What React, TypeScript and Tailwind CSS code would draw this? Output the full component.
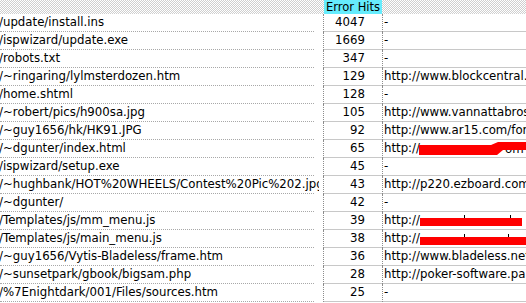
import React from "react";

type Row = { path: string; hits: string; ref: string; red?: "a" | "b" | "c" };

const rows: Row[] = [
  { path: "/update/install.ins", hits: "4047", ref: "-" },
  { path: "/ispwizard/update.exe", hits: "1669", ref: "-" },
  { path: "/robots.txt", hits: "347", ref: "-" },
  { path: "/~ringaring/lylmsterdozen.htm", hits: "129", ref: "http://www.blockcentral.com/" },
  { path: "/home.shtml", hits: "128", ref: "-" },
  { path: "/~robert/pics/h900sa.jpg", hits: "105", ref: "http://www.vannattabros.com/" },
  { path: "/~guy1656/hk/HK91.JPG", hits: "92", ref: "http://www.ar15.com/forums/" },
  { path: "/~dgunter/index.html", hits: "65", ref: "http://", red: "a" },
  { path: "/ispwizard/setup.exe", hits: "45", ref: "-" },
  { path: "/~hughbank/HOT%20WHEELS/Contest%20Pic%202.jpg", hits: "43", ref: "http://p220.ezboard.com/" },
  { path: "/~dgunter/", hits: "42", ref: "-" },
  { path: "/Templates/js/mm_menu.js", hits: "39", ref: "http://", red: "b" },
  { path: "/Templates/js/main_menu.js", hits: "38", ref: "http://", red: "c" },
  { path: "/~guy1656/Vytis-Bladeless/frame.htm", hits: "36", ref: "http://www.bladeless.net/" },
  { path: "/~sunsetpark/gbook/bigsam.php", hits: "28", ref: "http://poker-software.pa" },
  { path: "/%7Enightdark/001/Files/sources.htm", hits: "25", ref: "-" },
];

function Redact({ kind }: { kind: "a" | "b" | "c" }) {
  return (
    <svg className="absolute left-0 top-0" width="144" height="18" viewBox="0 0 144 18">
      {kind === "a" && (
        <>
          <text x="122" y="13" fontSize="11.75" fontFamily="DejaVu Sans" fill="#000">om</text>
          <polygon points="36,5 108,5 115,2 144,2 144,10 120,10 114,15 36,15" fill="#ff0000" />
        </>
      )}
      {kind === "b" && (
        <>
          <rect x="81" y="3" width="1" height="3" fill="#000" />
          <rect x="127" y="3" width="1" height="3" fill="#000" />
          <rect x="37" y="6" width="102" height="8" fill="#ff0000" />
        </>
      )}
      {kind === "c" && (
        <>
          <rect x="81" y="4" width="1" height="3" fill="#000" />
          <rect x="125" y="4" width="1" height="3" fill="#000" />
          <rect x="37" y="7" width="107" height="8" fill="#ff0000" />
        </>
      )}
    </svg>
  );
}

const checker =
  "bg-[repeating-conic-gradient(#cfcfcf_0_25%,#ffffff_0_50%)] bg-[length:2px_2px]";

export default function App() {
  return (
    <div className="w-[526px] h-[303px] overflow-hidden bg-white text-black font-['DejaVu_Sans',sans-serif] text-[11.75px] leading-none">
      <div className="flex h-[14px]">
        <div className={`w-[324px] ${checker}`} />
        <div className="w-[58px] bg-[#66ecfd] flex items-center justify-center text-[11.5px] pt-[1px] whitespace-nowrap">
          Error Hits
        </div>
        <div className={`flex-1 ${checker}`} />
      </div>
      {rows.map((r, i) => (
        <div key={i} className="flex h-[18px]">
          <div className="w-[323px] h-full overflow-hidden">
            <div className="w-[314px] h-full border-b border-dotted border-[#a8a8a8]">
              <div className="w-[320px] h-full flex items-center whitespace-nowrap -ml-[1px] overflow-hidden">
                {r.path}
              </div>
            </div>
          </div>
          <div className="w-[59px] h-full border-l border-dotted border-[#8c8c8c]">
            <div className="h-full border-b border-solid border-[#c8c8c8] flex items-center justify-end pr-[17px]">
              {r.hits}
            </div>
          </div>
          <div className="flex-1 h-full border-l border-dotted border-[#8c8c8c] overflow-hidden">
            <div className="relative h-full border-b border-solid border-[#c8c8c8] flex items-center pl-[1px] whitespace-nowrap">
              {r.ref}
              {r.red && <Redact kind={r.red} />}
            </div>
          </div>
        </div>
      ))}
    </div>
  );
}
